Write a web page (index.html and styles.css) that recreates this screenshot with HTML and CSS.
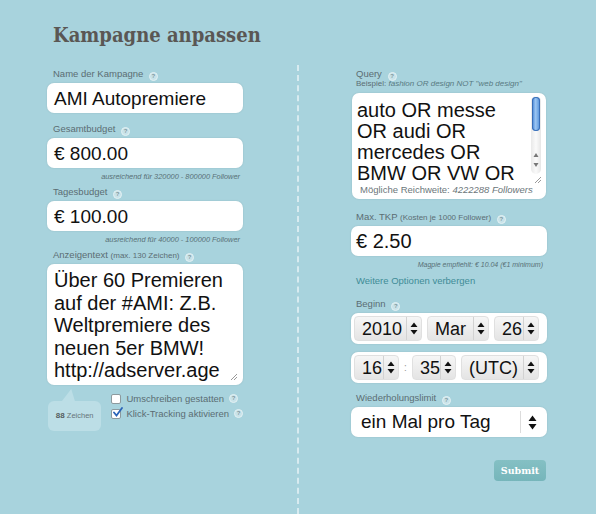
FILE: index.html
```html
<!DOCTYPE html>
<html>
<head>
<meta charset="utf-8">
<title>Kampagne anpassen</title>
<link rel="stylesheet" href="styles.css">
</head>
<body>
<div class="page">
  <h1 class="title">Kampagne anpassen</h1>
  <div class="cols">
    <div class="col left">
      <div class="field">
        <div class="label">Name der Kampagne <span class="help">?</span></div>
        <div class="input">AMI Autopremiere</div>
      </div>
      <div class="field has-hint">
        <div class="label">Gesamtbudget <span class="help">?</span></div>
        <div class="input">€ 800.00</div>
        <div class="hint">ausreichend für 320000 - 800000 Follower</div>
      </div>
      <div class="field has-hint">
        <div class="label">Tagesbudget <span class="help">?</span></div>
        <div class="input">€ 100.00</div>
        <div class="hint">ausreichend für 40000 - 100000 Follower</div>
      </div>
      <div class="field last">
        <div class="label">Anzeigentext <span class="small">(max. 130 Zeichen)</span> <span class="help">?</span></div>
        <div class="textarea">Über 60 Premieren<br>auf der #AMI: Z.B.<br>Weltpremiere des<br>neuen 5er BMW!<br>http://adserver.age
          <svg class="grip" width="8" height="8" viewBox="0 0 8 8"><path d="M7 1 L1 7 M7 4 L4 7" stroke="#9a9a9a" stroke-width="1" fill="none"/></svg>
        </div>
      </div>
      <div class="below">
        <div class="bubble"><b>88</b> Zeichen</div>
        <div class="checks">
          <div class="check"><span class="box"></span>Umschreiben gestatten <span class="help">?</span></div>
          <div class="check"><span class="box checked"><svg width="11" height="11" viewBox="0 0 11 11"><path d="M2 5.5 L4.5 8.5 L10 1" stroke="#2a64b8" stroke-width="1.8" fill="none" stroke-linecap="round"/></svg></span>Klick-Tracking aktivieren <span class="help">?</span></div>
        </div>
      </div>
    </div>
    <div class="divider"></div>
    <div class="col right">
      <div class="label tight">Query <span class="help">?</span></div>
      <div class="example">Beispiel: <i>fashion OR design NOT "web design"</i></div>
      <div class="query">
        <div class="qtext">auto OR messe OR audi OR mercedes OR BMW OR VW OR</div>
        <div class="reach">Mögliche Reichweite: <i>4222288 Followers</i></div>
        <div class="scroll">
          <div class="thumb"></div>
          <svg class="sarrows" width="8" height="18" viewBox="0 0 8 18"><path d="M4 2 L6.5 6 L1.5 6 Z M1.5 12 L6.5 12 L4 16 Z" fill="#777"/></svg>
        </div>
        <svg class="grip" width="8" height="8" viewBox="0 0 8 8"><path d="M7 1 L1 7 M7 4 L4 7" stroke="#9a9a9a" stroke-width="1" fill="none"/></svg>
      </div>
      <div class="field has-hint tkp">
        <div class="label">Max. TKP <span class="small">(Kosten je 1000 Follower)</span> <span class="help">?</span></div>
        <div class="input sm">€ 2.50</div>
        <div class="hint">Magpie empfiehlt: <i>€ 10.04</i> (€1 minimum)</div>
      </div>
      <a class="more" href="#">Weitere Optionen verbergen</a>
      <div class="label begin">Beginn <span class="help">?</span></div>
      <div class="selbox">
        <div class="sel w-year"><span class="v">2010</span><span class="arr"><svg width="8" height="13" viewBox="0 0 8 13"><path d="M4 0.5 L7.5 5 L0.5 5 Z M0.5 8 L7.5 8 L4 12.5 Z" fill="#111"/></svg></span></div>
        <div class="sel w-mon"><span class="v">Mar</span><span class="arr"><svg width="8" height="13" viewBox="0 0 8 13"><path d="M4 0.5 L7.5 5 L0.5 5 Z M0.5 8 L7.5 8 L4 12.5 Z" fill="#111"/></svg></span></div>
        <div class="sel w-day"><span class="v">26</span><span class="arr"><svg width="8" height="13" viewBox="0 0 8 13"><path d="M4 0.5 L7.5 5 L0.5 5 Z M0.5 8 L7.5 8 L4 12.5 Z" fill="#111"/></svg></span></div>
      </div>
      <div class="selbox time">
        <div class="sel w-hr"><span class="v">16</span><span class="arr"><svg width="8" height="13" viewBox="0 0 8 13"><path d="M4 0.5 L7.5 5 L0.5 5 Z M0.5 8 L7.5 8 L4 12.5 Z" fill="#111"/></svg></span></div>
        <span class="colon">:</span>
        <div class="sel w-min"><span class="v">35</span><span class="arr"><svg width="8" height="13" viewBox="0 0 8 13"><path d="M4 0.5 L7.5 5 L0.5 5 Z M0.5 8 L7.5 8 L4 12.5 Z" fill="#111"/></svg></span></div>
        <div class="sel w-tz"><span class="v">(UTC)</span><span class="arr"><svg width="8" height="13" viewBox="0 0 8 13"><path d="M4 0.5 L7.5 5 L0.5 5 Z M0.5 8 L7.5 8 L4 12.5 Z" fill="#111"/></svg></span></div>
      </div>
      <div class="label repeat">Wiederholungslimit <span class="help">?</span></div>
      <div class="select">
        <span class="v">ein Mal pro Tag</span>
        <span class="arr"><svg width="9" height="15" viewBox="0 0 9 15"><path d="M4.5 0.5 L8.5 6 L0.5 6 Z M0.5 9 L8.5 9 L4.5 14.5 Z" fill="#111"/></svg></span>
      </div>
      <div class="actions"><button class="submit" type="button">Submit</button></div>
    </div>
  </div>
</div>
</body>
</html>
```

FILE: styles.css
```css
html, body {
  margin: 0;
  padding: 0;
}
body {
  background: #a8d3dd;
  font-family: "Liberation Sans", Arial, sans-serif;
  color: #5b6d73;
  width: 596px;
  height: 514px;
  overflow: hidden;
}
.page {
  width: 596px;
}
.title {
  margin: 0;
  padding: 22px 0 0 53px;
  height: 26px;
  line-height: 26px;
  margin-bottom: 17px;
  font-family: "DejaVu Serif Condensed", "DejaVu Serif", serif;
  font-stretch: condensed;
  font-weight: bold;
  font-size: 20px;
  color: #5a5754;
}
.cols {
  display: flex;
  height: 449px;
}
.col {
  width: 196px;
  padding-top: 3px;
}
.left {
  margin-left: 47px;
}
.divider {
  width: 0;
  margin-left: 54px;
  border-left: 2px dashed rgba(255, 255, 255, 0.55);
}
.right {
  margin-left: 52px;
}
.label {
  font-size: 9.5px;
  line-height: 12px;
  height: 12px;
  padding-left: 6px;
  margin-bottom: 3px;
  color: #5b6d73;
  white-space: nowrap;
}
.right .label {
  padding-left: 5px;
}
.label .small {
  font-size: 8px;
}
.help {
  display: inline-block;
  width: 7px;
  height: 7px;
  border-radius: 50%;
  background: #c9e3e9;
  border: 1px solid #e4f1f4;
  color: #7f989e;
  font-size: 6px;
  font-weight: bold;
  line-height: 7px;
  text-align: center;
  vertical-align: -1px;
  margin-left: 3px;
}
.field {
  margin-bottom: 10px;
}
.field.has-hint {
  margin-bottom: 4px;
}
.field.last {
  margin-bottom: 0;
}
.input {
  background: #fff;
  border-radius: 7px;
  height: 30px;
  line-height: 31px;
  padding-left: 7px;
  font-size: 19px;
  color: #111;
  box-shadow: 0 0 2px rgba(0, 0, 0, 0.12);
}
.input.sm {
  padding-left: 5px;
  font-size: 20px;
}
.hint {
  margin-top: 4px;
  height: 10px;
  line-height: 10px;
  font-size: 7.4px;
  font-style: italic;
  color: #587076;
  text-align: right;
  padding-right: 3px;
  white-space: nowrap;
}
.textarea {
  position: relative;
  background: #fff;
  border-radius: 7px;
  height: 116px;
  padding: 5px 7px 0;
  font-size: 20px;
  line-height: 22.5px;
  color: #111;
  box-shadow: 0 0 2px rgba(0, 0, 0, 0.12);
}
.grip {
  position: absolute;
  right: 5px;
  bottom: 4px;
}
.below {
  display: flex;
  align-items: flex-start;
}
.bubble {
  position: relative;
  margin-top: 16px;
  margin-left: 1px;
  width: 55px;
  height: 30px;
  line-height: 30px;
  background: #bcdee6;
  border-radius: 6px;
  font-size: 7.5px;
  color: #66757a;
  text-align: center;
}
.bubble b {
  font-size: 8px;
  color: #555d60;
}
.bubble::before {
  content: "";
  position: absolute;
  left: 14px;
  top: -12px;
  width: 14px;
  height: 12px;
  background: #bcdee6;
  clip-path: polygon(0 100%, 66% 0, 92% 100%);
}
.checks {
  margin-left: 10px;
  margin-top: 6px;
}
.check {
  display: flex;
  align-items: center;
  height: 15px;
  font-size: 9.5px;
  color: #5b6d73;
  white-space: nowrap;
}
.check .help {
  margin-left: 5px;
}
.box {
  position: relative;
  width: 8px;
  height: 8px;
  background: #fff;
  border: 1px solid #8c9a9e;
  border-radius: 2px;
  margin-right: 5px;
}
.box svg {
  position: absolute;
  left: 0;
  top: -3px;
}
.label.tight {
  margin-bottom: 0;
  height: 11px;
  line-height: 11px;
}
.example {
  font-size: 8px;
  line-height: 10px;
  height: 10px;
  padding-left: 5px;
  margin-bottom: 4px;
  color: #5b6d73;
  white-space: nowrap;
}
.example i {
  color: #587a82;
}
.query {
  position: relative;
  background: #fff;
  border-radius: 7px;
  height: 106px;
  margin-left: 1px;
  width: 194px;
  padding: 7px 0 0 5px;
  box-sizing: border-box;
  box-shadow: 0 0 2px rgba(0, 0, 0, 0.12);
}
.qtext {
  width: 172px;
  height: 84px;
  overflow: hidden;
  font-size: 20px;
  line-height: 21px;
  color: #111;
}
.reach {
  font-size: 9.5px;
  line-height: 10px;
  padding-left: 3px;
  margin-top: 1px;
  color: #6b767a;
  white-space: nowrap;
}
.scroll {
  position: absolute;
  right: 5px;
  top: 3px;
  width: 10px;
  height: 78px;
  border-radius: 5px;
  background: linear-gradient(to right, #e9e9e9, #fafafa 50%, #e6e6e6);
}
.thumb {
  margin: 1px auto 0;
  width: 8px;
  height: 34px;
  border-radius: 4px;
  background: linear-gradient(to right, #3e7fd3, #9cc6f3 45%, #4f8ed9);
  box-shadow: inset 0 0 0 1px #3a6fb8;
}
.sarrows {
  display: block;
  margin: 20px auto 0;
}
.query .grip {
  right: 4px;
  bottom: 15px;
}
.tkp {
  margin-top: 12px;
}
.tkp .hint {
  padding-right: 4px;
  font-size: 7px;
}
.more {
  display: block;
  margin-top: 5px;
  padding-left: 5px;
  height: 12px;
  line-height: 12px;
  font-size: 9.5px;
  color: #3f8c97;
  text-decoration: none;
}
.label.begin {
  margin-top: 11px;
}
.selbox {
  display: flex;
  align-items: center;
  background: #fff;
  border-radius: 7px;
  height: 31px;
  padding: 0 3px;
  box-shadow: 0 0 2px rgba(0, 0, 0, 0.12);
}
.selbox .sel + .sel {
  margin-left: 5px;
}
.selbox.time {
  margin-top: 8px;
}
.sel {
  display: flex;
  height: 25px;
  box-sizing: border-box;
  border-radius: 4px;
  border: 1px solid #e0e0e0;
  background: linear-gradient(#f6f6f6, #e4e4e4);
  font-size: 18px;
  color: #111;
}
.sel .v {
  flex: 1;
  line-height: 24px;
  padding-left: 7px;
}
.sel .arr {
  width: 14px;
  display: flex;
  align-items: center;
  justify-content: center;
  border-left: 1px solid #d2d2d2;
}
.w-year { width: 68px; }
.w-mon { width: 62px; }
.w-day { width: 45px; }
.w-hr { width: 45px; }
.w-min { width: 44px; }
.w-tz { width: 78px; }
.selbox.time .w-tz {
  margin-left: 5px;
}
.colon {
  width: 13px;
  text-align: center;
  font-size: 10px;
  color: #999;
}
.label.repeat {
  margin-top: 9px;
}
.select {
  display: flex;
  background: #fff;
  border-radius: 7px;
  height: 30px;
  box-shadow: 0 0 2px rgba(0, 0, 0, 0.12);
  font-size: 19px;
  color: #111;
}
.select .v {
  flex: 1;
  line-height: 30px;
  padding-left: 10px;
}
.select .arr {
  width: 22px;
  margin: 4px 4px 4px 0;
  display: flex;
  align-items: center;
  justify-content: center;
  border-left: 1px solid #dcdcdc;
}
.actions {
  display: flex;
  justify-content: flex-end;
  margin-top: 23px;
  padding-right: 1px;
}
.submit {
  width: 52px;
  height: 21px;
  border: none;
  border-radius: 4px;
  background: linear-gradient(#84c0c4, #76b5ba);
  color: #fff;
  font-family: "DejaVu Serif", serif;
  font-weight: bold;
  font-size: 9.5px;
  padding: 0;
  cursor: pointer;
}
```
